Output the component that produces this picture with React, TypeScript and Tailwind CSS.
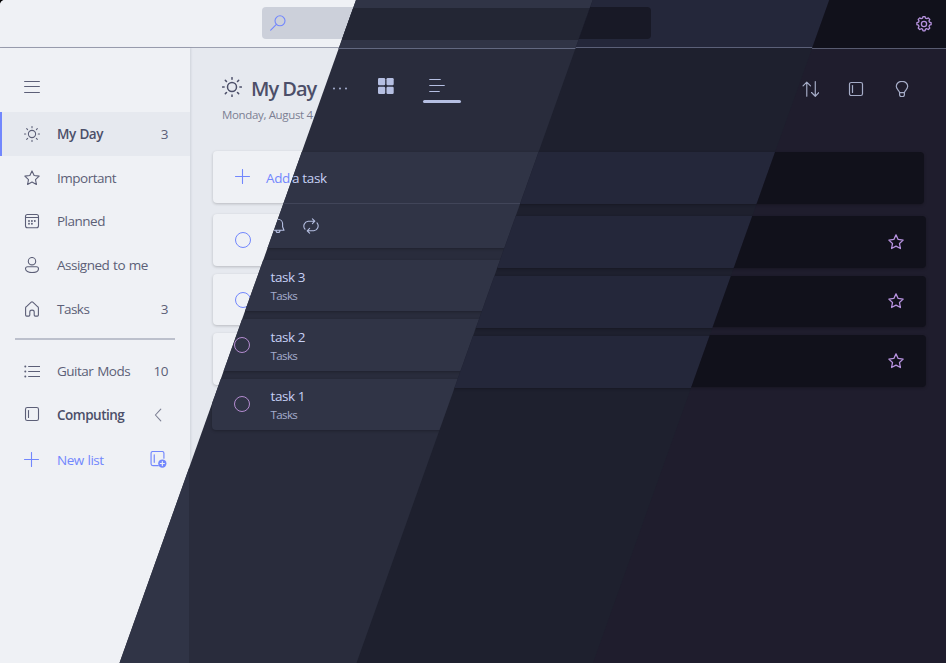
import React from "react";

type IconProps = { className?: string; children: React.ReactNode; size?: number; stroke?: number };

function Icon({ className = "", children, size = 16, stroke = 1.1 }: IconProps) {
  return (
    <svg
      width={size}
      height={size}
      viewBox="0 0 16 16"
      fill="none"
      stroke="currentColor"
      strokeWidth={stroke}
      strokeLinecap="round"
      strokeLinejoin="round"
      className={`shrink-0 ${className}`}
    >
      {children}
    </svg>
  );
}

const sun = (
  <>
    <circle cx="8" cy="8" r="3.6" />
    <path d="M8 .5v1.2M8 14.3v1.2M.5 8h1.2M14.3 8h1.2M2.7 2.7l.9.9M12.4 12.4l.9.9M2.7 13.3l.9-.9M12.4 3.6l.9-.9" />
  </>
);
const star = (
  <path d="M8 .9l2.15 4.55 5 .65-3.65 3.45.93 4.95L8 12.1l-4.43 2.4.93-4.95L.85 6.1l5-.65z" />
);
const calendar = (
  <>
    <rect x="1.5" y="1.5" width="13" height="13.200" rx="2" />
    <path d="M1.5 4.500h13" />
    <g fill="currentColor" stroke="none">
      <circle cx="5" cy="10.800" r=".95" />
      <circle cx="7.900" cy="10.800" r=".95" />
      <circle cx="5" cy="8" r=".95" />
      <circle cx="7.900" cy="8" r=".95" />
      <circle cx="10.800" cy="8" r=".95" />
    </g>
  </>
);
const person = (
  <>
    <circle cx="8" cy="4.2" r="3.7" />
    <path d="M3.6 9.8h8.8c1.2 0 2.1.9 2.1 2 0 2.3-2.8 3.8-6.5 3.8s-6.5-1.5-6.5-3.8c0-1.1.9-2 2.1-2z" />
  </>
);
const home = (
  <path d="M1.6 7.1c0-.5.2-1 .6-1.3L7.2 1.2a1.2 1.2 0 0 1 1.6 0l5 4.6c.4.3.6.8.6 1.3v7c0 .6-.5 1-1 1h-2.2c-.6 0-1-.4-1-1V11c0-1.1-.8-1.9-2.2-1.9S5.8 9.9 5.8 11v3.1c0 .6-.4 1-1 1H2.6c-.5 0-1-.4-1-1z" />
);
const listIcon = (
  <>
    <path d="M4.600 3.500h11M4.600 8.500h11M4.600 13.500h11" />
    <g fill="currentColor" stroke="none">
      <circle cx="1.300" cy="3.500" r="1" />
      <circle cx="1.300" cy="8.500" r="1" />
      <circle cx="1.300" cy="13.500" r="1" />
    </g>
  </>
);
const panel = (
  <>
    <rect x="1.500" y="1.500" width="13" height="13" rx="1.800" />
    <path d="M4.500 4.500v7" />
  </>
);
const plus = <path d="M7.500.5v14M.5 7.500h14" />;

const FONT = "font-['Open_Sans','Noto_Sans',sans-serif]";

type NavProps = {
  icon: React.ReactNode;
  label: string;
  count?: React.ReactNode;
  active?: boolean;
  bold?: boolean;
};

function NavRow({ icon, label, count, active, bold }: NavProps) {
  return (
    <div
      className={`flex h-[43.700px] items-center pr-[22px] ${
        active ? "border-l-2 border-[#7287fd] bg-[#e6e9ef] pl-[22px]" : "pl-6"
      }`}
    >
      <Icon>{icon}</Icon>
      <span className={`ml-[17px] ${bold ? "pt-px font-semibold text-[#4c4f69]" : "pt-[0.500px]"}`}>{label}</span>
      <span className="ml-auto pt-px">{count}</span>
    </div>
  );
}

function Sidebar() {
  return (
    <aside className="w-[190px] shrink-0 bg-[#eff1f5] text-[13.500px] tracking-[-0.5px] [word-spacing:0.8px] text-[#5c5f77] shadow-[1px_0_2px_#4c4f6926]">
      <div className="flex h-16 items-center pt-[14px] pl-6">
        <Icon>
          <path d="M.6 2.500h14.800M.6 7.500h14.800M.6 13.500h14.800" />
        </Icon>
      </div>
      <nav>
        <NavRow icon={sun} label="My Day" count="3" active bold />
        <NavRow icon={star} label="Important" />
        <NavRow icon={calendar} label="Planned" />
        <NavRow icon={person} label="Assigned to me" />
        <NavRow icon={home} label="Tasks" count="3" />
      </nav>
      <div className="mt-[8px] mr-[15px] mb-[8.500px] ml-[15px] h-[2px] bg-[#bcc0cc]" />
      <NavRow icon={listIcon} label="Guitar Mods" count="10" />
      <NavRow
        icon={panel}
        label="Computing"
        bold
        count={
          <Icon className="mr-px text-[#7c7f93]">
            <path d="M9.800 2.200L4.400 8l5.400 5.800" />
          </Icon>
        }
      />
      <div className="flex h-12 items-center pl-6 text-[#7287fd]">
        <Icon>{plus}</Icon>
        <span className="ml-[17px]">New list</span>
        <Icon className="mr-[23px] mb-[2px] ml-auto" size={17}>
          <path d="M7.800 13.800H2.700A1.700 1.700 0 0 1 1 12.100V2.200A1.700 1.700 0 0 1 2.700.5h8.700a1.700 1.700 0 0 1 1.700 1.700v4.600M4 3.500v7.200" />
          <circle cx="11.600" cy="11.800" r="3.900" fill="currentColor" stroke="none" />
          <path d="M11.600 9.900v3.800M9.700 11.800h3.800" stroke="#eff1f5" />
        </Icon>
      </div>
    </aside>
  );
}

function Ring({ className }: { className: string }) {
  return <span className={`size-4 shrink-0 rounded-full border ${className}`} />;
}

function LatteLayer() {
  return (
    <section className="flex flex-col bg-[#e6e9ef] [grid-area:1/1]">
      <header className="flex h-12 shrink-0 border-b border-[#9ca0b0] bg-[#eff1f5] pt-[7px] pl-[262px]">
        <div className="flex h-8 w-[389px] items-center rounded bg-[#ccd0da] pl-2 text-[#7287fd]">
          <Icon>
            <circle cx="10" cy="5.800" r="5" />
            <path d="M6.400 9.400L.7 15.200" />
          </Icon>
        </div>
      </header>
      <div className="flex flex-1">
        <Sidebar />
        <main className="flex-1 pl-[23px]">
          <div className="flex h-[59px] items-end pl-[9px] text-[#4c4f69]">
            <Icon size={20} stroke={1.200} className="mb-[10px]">{sun}</Icon>
            <h1 className="ml-[9px] text-[20px] leading-[36px] font-semibold tracking-[-1px]">My Day</h1>
          </div>
          <p className="h-[44px] pl-[9px] text-[11.500px] leading-4 tracking-[-0.35px] text-[#7c7f93]">
            Monday, August 4
          </p>
          <div className="flex h-[51.500px] w-[712px] items-center rounded bg-[#eff1f5] pl-[22px] text-[13.500px] tracking-[-0.4px] text-[#7287fd] shadow-[0_1px_3px_#00000033]">
            <Icon>{plus}</Icon>
            <span className="ml-[15px] pt-[2px]">Add</span>
          </div>
          <div className="mt-[11.500px] flex flex-col gap-2">
            {["one", "two", "three"].map((row) => (
              <div
                key={row}
                className="flex h-[51.700px] w-[712px] items-center rounded bg-[#eff1f5] pl-[22px] shadow-[0_1px_3px_#00000033]"
              >
                <Ring className="border-[#7287fd]" />
              </div>
            ))}
          </div>
        </main>
      </div>
    </section>
  );
}

function FrappeLayer() {
  const tasks = [
    { title: "task 3", ring: false },
    { title: "task 2", ring: true },
    { title: "task 1", ring: true },
  ];
  return (
    <section className="flex flex-col bg-[#292c3c] text-[#b5bfe2] [clip-path:polygon(356px_0,100%_0,100%_100%,119.500px_100%)] [grid-area:1/1]">
      <header className="h-[49px] shrink-0 border-b border-[#626880] bg-[#303446] pt-2 pl-[262px]">
        <div className="h-8 w-[389px] rounded bg-[#232634]" />
      </header>
      <div className="flex flex-1">
        <aside className="w-[189px] shrink-0 bg-[#303446]" />
        <main className="flex-1 pl-[23px]">
          <div className="flex h-[102.500px] pl-[120px]">
            <Icon className="mt-[31px]">
              <g fill="currentColor" stroke="none">
                <circle cx="2" cy="8.500" r=".9" />
                <circle cx="8" cy="8.500" r=".9" />
                <circle cx="14" cy="8.500" r=".9" />
              </g>
            </Icon>
            <Icon className="mt-[29px] ml-[30px]">
              <g fill="currentColor" stroke="none">
                <rect x="0" y="0" width="7.200" height="7.200" rx="1.200" />
                <rect x="8.500" y="0" width="7.200" height="7.200" rx="1.200" />
                <rect x="0" y="8.700" width="7.200" height="7.200" rx="1.200" />
                <rect x="8.500" y="8.700" width="7.200" height="7.200" rx="1.200" />
              </g>
            </Icon>
            <div className="mt-[29px] ml-[29px] flex h-[25px] w-[38px] flex-col justify-between">
              <Icon className="ml-[6px]">
                <path d="M.7 1.500h10.600M.7 7.500h14.600M.7 13.500h9.600" />
              </Icon>
              <div className="h-[3px] rounded-full bg-[#b5bfe2]" />
            </div>
          </div>
          <div className="h-[96.500px] w-[712px] rounded bg-[#303446] shadow-[0_1px_3px_#00000040]">
            <div className="flex h-[52.500px] items-center border-b border-[#414559] pt-[2px] pl-[80px] text-[13.500px] tracking-[-0.35px] text-[#c6d0f5]">
              a task
            </div>
            <div className="flex h-[44px] items-center gap-[17px] pl-[57.500px]">
              <Icon>
                <path d="M8 1.200a4.600 4.600 0 0 0-4.600 4.600v3L2 12.300h12l-1.400-3.500v-3A4.600 4.600 0 0 0 8 1.200zM6 12.500a2 2 0 0 0 4 0" />
              </Icon>
              <Icon>
                <path d="M2 11.200A4.900 4.900 0 0 1 5.200 3.200h6.200M9.400.8l2.400 2.400-2.400 2.400M14 4.800a4.900 4.900 0 0 1-3.200 8H4.600M6.600 10.400l-2.400 2.400 2.400 2.400" />
              </Icon>
            </div>
          </div>
          <div className="mt-[11.500px] flex flex-col gap-2">
            {tasks.map((task) => (
              <div
                key={task.title}
                className="flex h-[51.500px] w-[712px] items-center rounded bg-[#303446] pl-[22px] shadow-[0_1px_3px_#00000040]"
              >
                {task.ring ? <Ring className="border-[#b48cd0]" /> : <span className="w-4" />}
                <div className="ml-[20.500px] pt-[3px]">
                  <p className="text-[13.500px] leading-[19px] tracking-[-0.4px] text-[#c6d0f5]">{task.title}</p>
                  <p className="text-[11.500px] leading-[18px] tracking-[-0.6px] text-[#a5adce]">Tasks</p>
                </div>
              </div>
            ))}
          </div>
        </main>
      </div>
    </section>
  );
}

function MacchiatoLayer() {
  return (
    <section className="flex flex-col bg-[#1e202e] [clip-path:polygon(592.700px_0,100%_0,100%_100%,356.500px_100%)] [grid-area:1/1]">
      <header className="h-12 shrink-0 border-b border-[#5b6078] bg-[#24273a] pt-[7px] pl-[262px]">
        <div className="h-8 w-[389px] rounded bg-[#181926]" />
      </header>
      <main className="flex flex-col pt-[104px] pl-[212px]">
        <div className="h-[52px] w-[712px] rounded bg-[#24273a] shadow-[0_1px_3px_#00000040]" />
        <div className="mt-3 flex flex-col gap-2">
          {["one", "two", "three"].map((row) => (
            <div key={row} className="h-[52px] w-[714px] rounded bg-[#24273a] shadow-[0_1px_3px_#00000040]" />
          ))}
        </div>
      </main>
    </section>
  );
}

function MochaLayer() {
  return (
    <section className="flex flex-col bg-[#1f1d2d] [clip-path:polygon(829.300px_0,100%_0,100%_100%,593px_100%)] [grid-area:1/1]">
      <header className="flex h-[49px] shrink-0 justify-end border-b border-[#585b70] bg-[#11111b] pt-4 pr-[14px] text-[#b692de]">
        <Icon stroke={1.300}>
          <circle cx="8" cy="8" r="2.600" />
          <path d="M6.500 2.200L7 .6h2l.5 1.600 1.300.5 1.500-.8 1.500 1.500-.8 1.500.5 1.300 1.600.5v2l-1.600.5-.5 1.300.8 1.500-1.500 1.500-1.500-.8-1.300.5-.5 1.600H7l-.5-1.600-1.300-.5-1.500.8-1.500-1.500.8-1.500-.5-1.300-1.600-.5v-2l1.600-.5.500-1.300-.8-1.500 1.500-1.500 1.500.8z" />
        </Icon>
      </header>
      <main className="flex flex-col pl-[212px]">
        <div className="flex h-[103px] justify-end gap-[30px] pt-[31px] pr-[36px] text-[#a6adc8]">
          <Icon size={17} className="-mr-px">
            <path d="M4.500 15.300V2M1 5.500L4.500 2 8 5.500M12.500 1.500v13.800M9 11.800l3.500 3.500 3.500-3.500" />
          </Icon>
          <Icon className="mt-px" stroke={1.200}>{panel}</Icon>
          <Icon className="mt-px" stroke={1.200}>
            <path d="M5.600 11.600C5.200 9.300 2.300 8.300 2.300 5.300a5.700 5 0 0 1 11.400 0c0 3-2.900 4-3.300 6.300zM5.600 11.600v2.200c0 .9.700 1.700 1.500 1.700h1.800c.8 0 1.500-.8 1.500-1.700v-2.200" />
          </Icon>
        </div>
        <div className="h-[52px] w-[712px] rounded bg-[#11111b] shadow-[0_1px_3px_#00000040]" />
        <div className="mt-3 flex flex-col gap-2">
          {["one", "two", "three"].map((row) => (
            <div
              key={row}
              className="flex h-[51.600px] w-[714px] items-center justify-end rounded bg-[#11111b] pr-[22px] text-[#b692de] shadow-[0_1px_3px_#00000040]"
            >
              <Icon stroke={1.300}>{star}</Icon>
            </div>
          ))}
        </div>
      </main>
    </section>
  );
}

export default function App() {
  return (
    <div className="bg-black">
      <div className={`grid h-[663px] w-[946px] overflow-hidden rounded-tl-[5px] ${FONT}`}>
        <LatteLayer />
        <FrappeLayer />
        <MacchiatoLayer />
        <MochaLayer />
      </div>
    </div>
  );
}
